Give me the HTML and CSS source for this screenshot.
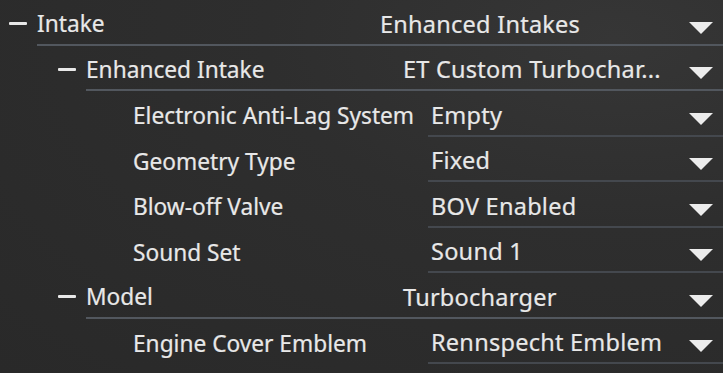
FILE: index.html
```html
<!DOCTYPE html>
<html>
<head>
<meta charset="utf-8">
<link rel="stylesheet" href="styles.css">
</head>
<body>
<div class="tree">
  <div class="row lvl0 first">
    <span class="toggle"></span>
    <div class="body">
      <span class="label">Intake</span>
      <div class="select"><span class="val">Enhanced Intakes</span><span class="arrow"></span></div>
    </div>
  </div>
  <div class="row lvl1">
    <span class="toggle"></span>
    <div class="body">
      <span class="label">Enhanced Intake</span>
      <div class="select"><span class="val">ET Custom Turbochar...</span><span class="arrow"></span></div>
    </div>
  </div>
  <div class="row lvl2">
    <div class="body">
      <span class="label">Electronic Anti-Lag System</span>
      <div class="select"><span class="val">Empty</span><span class="arrow"></span></div>
    </div>
  </div>
  <div class="row lvl2">
    <div class="body">
      <span class="label">Geometry Type</span>
      <div class="select"><span class="val">Fixed</span><span class="arrow"></span></div>
    </div>
  </div>
  <div class="row lvl2">
    <div class="body">
      <span class="label">Blow-off Valve</span>
      <div class="select"><span class="val">BOV Enabled</span><span class="arrow"></span></div>
    </div>
  </div>
  <div class="row lvl2">
    <div class="body">
      <span class="label">Sound Set</span>
      <div class="select"><span class="val">Sound 1</span><span class="arrow"></span></div>
    </div>
  </div>
  <div class="row lvl1">
    <span class="toggle"></span>
    <div class="body">
      <span class="label">Model</span>
      <div class="select"><span class="val">Turbocharger</span><span class="arrow"></span></div>
    </div>
  </div>
  <div class="row lvl2">
    <div class="body">
      <span class="label">Engine Cover Emblem</span>
      <div class="select"><span class="val">Rennspecht Emblem</span><span class="arrow"></span></div>
    </div>
  </div>
</div>
</body>
</html>
```
FILE: styles.css
```css
html, body {
  margin: 0;
  padding: 0;
  height: 100%;
}
body {
  background: radial-gradient(ellipse at 85% 10%, #363636 0%, #2e2e2e 40%, #292929 100%);
  font-family: "Noto Sans", "Open Sans", sans-serif;
  font-size: 22.7px;
  color: #e8e8e8;
  overflow: hidden;
}
.tree {
  display: flex;
  flex-direction: column;
}
.row {
  display: flex;
  height: 45.5px;
  align-items: stretch;
}
.toggle {
  width: 18px;
  flex: none;
  margin-right: 10px;
  position: relative;
}
.toggle::before {
  content: "";
  position: absolute;
  left: 0;
  right: 0;
  top: 22px;
  height: 3px;
  background: #e8e8e8;
  border-radius: 1px;
}
.body {
  flex: 1;
  display: flex;
  align-items: stretch;
  box-sizing: border-box;
}
.label {
  display: flex;
  align-items: center;
  padding-top: 4px;
  white-space: nowrap;
  flex: none;
  -webkit-text-stroke: 0.2px #e8e8e8;
}
.select {
  flex: 1;
  display: flex;
  align-items: center;
  justify-content: space-between;
  padding-left: 5px;
  padding-right: 10px;
  box-sizing: border-box;
}
.val {
  padding-top: 4px;
  white-space: nowrap;
  font-size: 23.5px;
  letter-spacing: 0.25px;
  -webkit-text-stroke: 0.2px #e8e8e8;
}
.arrow {
  width: 0;
  height: 0;
  border-left: 12px solid transparent;
  border-right: 12px solid transparent;
  border-top: 12px solid #ececec;
  margin-top: 12px;
}
.lvl0 { padding-left: 9px; }
.lvl0 .body { border-bottom: 2px solid #52575e; }
.lvl0 .label { width: 338px; }
.first .body { border-top: 1px solid #52575e; margin-top: -1px; }
.lvl1 { padding-left: 58px; }
.lvl1 .body { border-bottom: 2px solid #52575e; }
.lvl1 .label { width: 312px; }
.lvl1 .select { padding-left: 5px; }
.lvl2 { padding-left: 133px; }
.lvl2 .label { width: 295px; }
.lvl2 .select { border-bottom: 2px solid #44484e; padding-left: 3px; }
```
